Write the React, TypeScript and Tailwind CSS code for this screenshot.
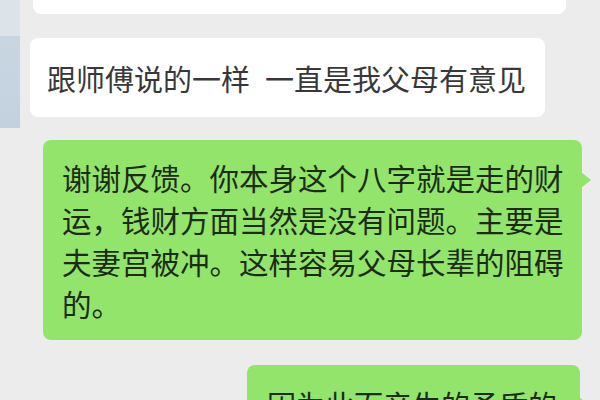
const FONT = { fontFamily: '"Noto Sans CJK SC", "Noto Sans", sans-serif' };

const replyLines = [
  "谢谢反馈。你本身这个八字就是走的财",
  "运，钱财方面当然是没有问题。主要是",
  "夫妻宫被冲。这样容易父母长辈的阻碍",
  "的。",
];

function OutTail({ top }: { top: string }) {
  return (
    <span
      className={`absolute ${top} -right-[9px] w-0 h-0 border-y-[8px] border-y-transparent border-l-[10px] border-l-[#93e46b]`}
    />
  );
}

export default function App() {
  return (
    <div className="w-[600px] h-[400px] overflow-hidden bg-[#ececec] flex items-start" style={FONT}>
      {/* cropped avatar at the left edge */}
      <div className="w-[20px] shrink-0 flex flex-col">
        <div className="h-[36px] bg-[#dce3e9]" />
        <div className="h-[92px] bg-gradient-to-b from-[#c9d6e2] to-[#c3d1df]" />
      </div>

      <div className="flex-1 flex flex-col">
        {/* previous incoming message, mostly scrolled away */}
        <div className="shrink-0 -mt-[46px] ml-[13px] w-[533px] h-[60px] bg-white rounded-lg" />

        <div className="shrink-0 mt-[24px] ml-[10px] w-[515px] h-[79px] bg-white rounded-lg pl-[17px] flex items-center">
          <p className="text-[29px] leading-[42px] text-[#383838] whitespace-nowrap">
            跟师傅说的一样<span className="inline-block w-[15px]" />一直是我父母有意见
          </p>
        </div>

        <div className="shrink-0 mt-[23px] ml-[23px] w-[539px] relative bg-[#93e46b] rounded-lg pl-[19px] py-[16px]">
          <OutTail top="top-[32px]" />
          <p className="text-[29.5px] leading-[42px] text-[#1c2c14] whitespace-nowrap">
            {replyLines.map((l) => (
              <span key={l} className="block">
                {l}
              </span>
            ))}
          </p>
        </div>

        <div className="shrink-0 mt-[25px] ml-[227px] w-[333px] relative bg-[#93e46b] rounded-lg pl-[20px] py-[18px]">
          <OutTail top="top-[32px]" />
          <p className="text-[29px] leading-[42px] text-[#1c2c14] whitespace-nowrap">
            因为此而产生的矛盾的
            <span className="block">问题，需要慢慢化解。</span>
          </p>
        </div>
      </div>
    </div>
  );
}
